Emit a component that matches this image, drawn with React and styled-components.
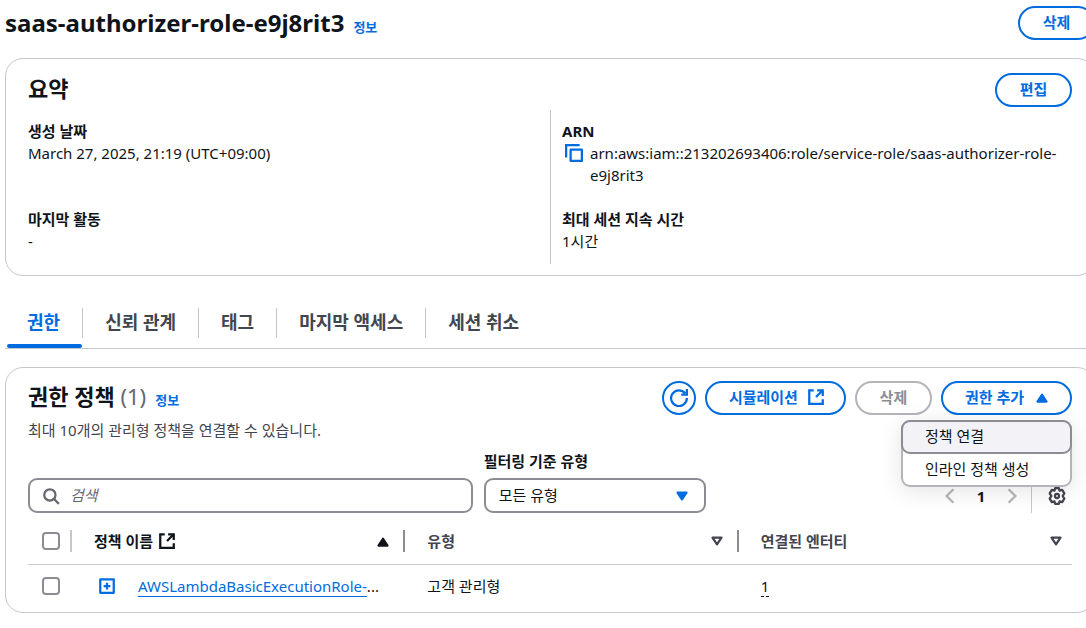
import React from 'react';
import styled, { createGlobalStyle } from 'styled-components';

const GlobalStyle = createGlobalStyle`
  * {
    box-sizing: border-box;
  }

  body {
    margin: 0;
    background: #fff;
    color: #0f141a;
    font-family: 'Noto Sans', 'Noto Sans CJK KR', sans-serif;
    font-size: 15px;
    line-height: 22px;
    overflow-x: hidden;
  }

  button,
  input,
  select {
    font: inherit;
    color: inherit;
  }
`;

// The console content runs a little past the right edge of the window
const Page = styled.main`
  margin: 0 -9px 0 5px;
  padding-top: 6px;
`;

const PageHeader = styled.header`
  display: flex;
  align-items: center;
  justify-content: space-between;
  margin-bottom: 18px;
`;

const TitleGroup = styled.div`
  display: flex;
  align-items: baseline;
  gap: 9px;
`;

const PageTitle = styled.h1`
  margin: 0;
  font-size: 24px;
  line-height: 34px;
  font-weight: 700;
`;

const InfoLink = styled.a`
  color: #006ce0;
  font-size: 13px;
  line-height: 18px;
  font-weight: 700;
  text-decoration: none;
`;

const Button = styled.button`
  display: inline-flex;
  align-items: center;
  justify-content: center;
  gap: 9px;
  min-width: 77px;
  height: 34px;
  padding: 0 ${({ $icon }) => ($icon ? '19px' : '22px')} 2px 22px;
  border: 2px solid ${({ disabled }) => (disabled ? '#b4b4bb' : '#006ce0')};
  border-radius: 22px;
  background: #fff;
  color: ${({ disabled }) => (disabled ? '#8c8c94' : '#006ce0')};
  font-weight: 700;
  white-space: nowrap;
`;

const IconButton = styled(Button)`
  width: 34px;
  min-width: 34px;
  padding: 0;
`;

const PlainButton = styled.button`
  display: inline-flex;
  align-items: center;
  justify-content: center;
  padding: 0;
  border: 0;
  background: none;
  color: ${({ $color }) => $color || '#424650'};
`;

const Card = styled.section`
  border: 1px solid #c6c6cd;
  border-radius: 18px;
  padding: 0 22px;
`;

const CardHeader = styled.div`
  display: flex;
  align-items: flex-start;
  justify-content: space-between;
  padding-top: 14px;
`;

const CardTitle = styled.h2`
  margin: 0;
  font-size: 22px;
  line-height: 30px;
  font-weight: 700;
`;

const Counter = styled.span`
  color: #656871;
  font-weight: 400;
`;

const Description = styled.p`
  margin: 8px 0 0;
  color: #424650;
`;

const Summary = styled.div`
  display: grid;
  grid-template-columns: 1fr 1fr;
  margin: 3px 0 11px;
`;

const SummaryColumn = styled.dl`
  display: grid;
  grid-template-rows: 66px 44px;
  gap: 22px;
  margin: 0;
  padding: 10px 0 12px;

  & + & {
    padding-left: 11px;
    border-left: 1px solid #c6c6cd;
  }

  dt {
    font-weight: 700;
  }

  dd {
    margin: 0;
  }
`;

const CopyValue = styled.div`
  display: flex;
  align-items: flex-start;
  gap: 7px;
  padding-left: 3px;

  button {
    height: 22px;
  }
`;

const TabList = styled.div`
  display: flex;
  margin-top: 24px;
  padding-bottom: 10px;
  border-bottom: 1px solid #c6c6cd;
`;

const Tab = styled.button`
  position: relative;
  height: 30px;
  margin-top: 8px;
  padding: 0 22px 2px;
  border: 0;
  border-right: ${({ $last }) => ($last ? '0' : '1px solid #c6c6cd')};
  background: none;
  color: ${({ $active }) => ($active ? '#006ce0' : '#424650')};
  font-size: 18px;
  font-weight: 700;

  &::after {
    content: '';
    display: ${({ $active }) => ($active ? 'block' : 'none')};
    position: absolute;
    left: 2px;
    right: 0;
    bottom: -10px;
    height: 4px;
    border-radius: 2px;
    background: #006ce0;
  }
`;

const PolicyCard = styled(Card)`
  margin-top: 18px;
  padding-bottom: 4px;

  ${CardHeader} {
    padding-top: 13px;
  }
`;

const Actions = styled.div`
  display: flex;
  gap: 9px;
`;

const MenuAnchor = styled.div`
  position: relative;
`;

const Menu = styled.ul`
  position: absolute;
  z-index: 2;
  top: 39px;
  right: 0;
  width: 171px;
  margin: 0;
  padding: 0;
  list-style: none;
  border: 2px solid #b4b4bb;
  border-radius: 9px;
  background: #fff;
  box-shadow: 0 4px 22px 1px rgba(0, 7, 22, 0.1);
`;

const MenuItem = styled.li`
  button {
    width: 100%;
    height: 31px;
    padding: 0 22px 2px;
    border: 0;
    background: none;
    text-align: left;
  }

  button[data-highlighted='true'] {
    width: calc(100% + 4px);
    height: 34px;
    margin: -2px -2px 0;
    border: 2px solid #8c8c94;
    border-radius: 9px;
    background: #f3f3f7;
  }
`;

const Filters = styled.div`
  display: grid;
  grid-template-columns: 2fr 1fr 355px;
  align-items: end;
  gap: 11px;
  margin-top: 9px;
`;

const Field = styled.div`
  display: flex;
  align-items: center;
  height: 35px;
  border: 2px solid #8c8c94;
  border-radius: 9px;
  background: #fff;
`;

const SearchField = styled(Field)`
  gap: 10px;
  padding: 0 12px;
  color: #656871;

  input {
    flex: 1;
    min-width: 0;
    height: 28px;
    padding: 0 0 2px;
    border: 0;
    outline: 0;
    background: none;
  }

  input::placeholder {
    color: #656871;
    font-style: italic;
    opacity: 1;
  }
`;

const TypeFilter = styled.div`
  label {
    display: block;
    margin-bottom: 6px;
    font-weight: 700;
  }
`;

const SelectField = styled(Field)`
  position: relative;
  color: #006ce0;

  select {
    width: 100%;
    height: 31px;
    padding: 0 36px 2px 13px;
    border: 0;
    outline: 0;
    appearance: none;
    background: none;
    color: #0f141a;
  }

  svg {
    position: absolute;
    right: 13px;
    pointer-events: none;
  }
`;

const Pager = styled.div`
  display: flex;
  align-items: center;
  justify-content: flex-end;
  height: 35px;
`;

const PageControls = styled.div`
  display: flex;
  gap: 13px;
  align-items: center;
  padding-right: 10px;

  button {
    width: 18px;
    height: 30px;
  }
`;

const PageNumber = styled(PlainButton)`
  color: #0f141a;
  font-weight: 700;
`;

const Preferences = styled.div`
  display: flex;
  align-items: center;
  height: 35px;
  padding: 0 6px 0 16px;
  border-left: 1px solid #c6c6cd;
`;

const Table = styled.table`
  width: 100%;
  margin-top: 5px;
  border-collapse: collapse;
  table-layout: fixed;
`;

const HeadCell = styled.th`
  height: 46px;
  padding: 0;
  border-bottom: 1px solid #c6c6cd;
  color: ${({ $sorted }) => ($sorted ? '#0f141a' : '#424650')};
  font-weight: 700;
  text-align: left;
`;

const HeadContent = styled.div`
  display: flex;
  align-items: center;
  justify-content: space-between;
  height: 22px;
  padding: 0 ${({ $last }) => ($last ? '7px' : '11px')} 0 22px;
  border-right: ${({ $last }) => ($last ? '0' : '2px solid #8c8c94')};
`;

const CheckHead = styled.div`
  display: flex;
  align-items: center;
  height: 22px;
  padding-left: 14px;
  border-right: 2px solid #c6c6cd;
`;

const HeadLabel = styled.span`
  display: inline-flex;
  align-items: center;
  gap: 5px;
`;

const Cell = styled.td`
  height: 44px;
  padding: 0 0 0 ${({ $check }) => ($check ? '14px' : '22px')};
`;

const Checkbox = styled.input.attrs({ type: 'checkbox' })`
  display: block;
  flex: none;
  width: 18px;
  height: 18px;
  margin: 0;
  appearance: none;
  border: 2px solid #8c8c94;
  border-radius: 4px;
  background: #fff;
`;

const PolicyName = styled.div`
  display: flex;
  align-items: center;
  gap: 22px;
  padding-left: 4px;
  white-space: nowrap;
`;

const PolicyLink = styled.a`
  border-bottom: 1px solid #006ce0;
  color: #006ce0;
  text-decoration: none;
`;

const EntityCount = styled.button`
  padding: 0;
  border: 0;
  border-bottom: 1px dashed #0f141a;
  background: none;
  line-height: 20px;
`;

const Icon = ({ size = 18, children }) => (
  <svg
    width={size}
    height={size}
    viewBox="0 0 16 16"
    fill="none"
    stroke="currentColor"
    strokeWidth="2"
    aria-hidden="true"
  >
    {children}
  </svg>
);

const ExternalIcon = () => (
  <Icon>
    <path d="M9 2h5v5" />
    <path d="m8 8 6-6" />
    <path d="M14 10v4H2V2h4" />
  </Icon>
);

const RefreshIcon = () => (
  <Icon>
    <path d="M15 8A7 7 0 1 1 13.6 4" />
    <path d="M15 0v5h-5" />
  </Icon>
);

const CopyIcon = () => (
  <Icon>
    <path d="M15 5H5v10h10V5Z" strokeLinejoin="round" />
    <path d="M13 1H1v11" />
  </Icon>
);

const SearchIcon = () => (
  <Icon>
    <circle cx="7" cy="7" r="5" />
    <path d="m15 15-4.5-4.5" />
  </Icon>
);

const ExpandIcon = () => (
  <Icon>
    <path d="M2 2h12v12H2z" strokeLinejoin="round" />
    <path d="M8 5v6M5 8h6" />
  </Icon>
);

const GearIcon = () => (
  <Icon>
    <path
      d="M6.3 1h3.4l.5 2.2 2.4-.6 1.9 3L13 8l1.5 2.4-1.9 3-2.4-.6-.5 2.2H6.3l-.5-2.2-2.4.6-1.9-3L3 8 1.5 5.6l1.9-3 2.4.6z"
      strokeLinejoin="round"
    />
    <circle cx="8" cy="8" r="1.8" />
  </Icon>
);

const ChevronIcon = ({ direction }) => (
  <Icon>
    <path d={direction === 'left' ? 'M11 2 5 8l6 6' : 'm5 2 6 6-6 6'} />
  </Icon>
);

const TriangleIcon = ({ direction, hollow }) => (
  <Icon>
    <path
      d={direction === 'up' ? 'M4 12h8L8 6z' : 'M4 5h8l-4 6z'}
      fill={hollow ? 'none' : 'currentColor'}
      strokeLinejoin="round"
    />
  </Icon>
);

const tabs = ['권한', '신뢰 관계', '태그', '마지막 액세스', '세션 취소'];

const policies = [
  { name: 'AWSLambdaBasicExecutionRole-', type: '고객 관리형', entities: 1 },
];

const App = () => (
  <>
    <GlobalStyle />
    <Page>
      <PageHeader>
        <TitleGroup>
          <PageTitle>saas-authorizer-role-e9j8rit3</PageTitle>
          <InfoLink href="#info">정보</InfoLink>
        </TitleGroup>
        <Button>삭제</Button>
      </PageHeader>

      <Card>
        <CardHeader>
          <CardTitle>요약</CardTitle>
          <Button>편집</Button>
        </CardHeader>
        <Summary>
          <SummaryColumn>
            <div>
              <dt>생성 날짜</dt>
              <dd>March 27, 2025, 21:19 (UTC+09:00)</dd>
            </div>
            <div>
              <dt>마지막 활동</dt>
              <dd>-</dd>
            </div>
          </SummaryColumn>
          <SummaryColumn>
            <div>
              <dt>ARN</dt>
              <dd>
                <CopyValue>
                  <PlainButton $color="#006ce0" aria-label="ARN 복사">
                    <CopyIcon />
                  </PlainButton>
                  <span>
                    arn:aws:iam::213202693406:role/service-role/saas-authorizer-role-e9j8rit3
                  </span>
                </CopyValue>
              </dd>
            </div>
            <div>
              <dt>최대 세션 지속 시간</dt>
              <dd>1시간</dd>
            </div>
          </SummaryColumn>
        </Summary>
      </Card>

      <TabList role="tablist">
        {tabs.map((tab, i) => (
          <Tab
            key={tab}
            role="tab"
            aria-selected={i === 0}
            $active={i === 0}
            $last={i === tabs.length - 1}
          >
            {tab}
          </Tab>
        ))}
      </TabList>

      <PolicyCard>
        <CardHeader>
          <div>
            <TitleGroup>
              <CardTitle>
                권한 정책 <Counter>(1)</Counter>
              </CardTitle>
              <InfoLink href="#policy-info">정보</InfoLink>
            </TitleGroup>
            <Description>최대 10개의 관리형 정책을 연결할 수 있습니다.</Description>
          </div>
          <Actions>
            <IconButton aria-label="새로 고침">
              <RefreshIcon />
            </IconButton>
            <Button $icon>
              시뮬레이션
              <ExternalIcon />
            </Button>
            <Button disabled>삭제</Button>
            <MenuAnchor>
              <Button $icon aria-expanded="true" aria-haspopup="menu">
                권한 추가
                <TriangleIcon direction="up" />
              </Button>
              <Menu role="menu">
                <MenuItem role="none">
                  <button role="menuitem" data-highlighted="true">
                    정책 연결
                  </button>
                </MenuItem>
                <MenuItem role="none">
                  <button role="menuitem">인라인 정책 생성</button>
                </MenuItem>
              </Menu>
            </MenuAnchor>
          </Actions>
        </CardHeader>

        <Filters>
          <SearchField>
            <SearchIcon />
            <input type="text" placeholder="검색" aria-label="검색" />
          </SearchField>
          <TypeFilter>
            <label htmlFor="policy-type">필터링 기준 유형</label>
            <SelectField>
              <select id="policy-type" defaultValue="all">
                <option value="all">모든 유형</option>
              </select>
              <TriangleIcon direction="down" />
            </SelectField>
          </TypeFilter>
          <Pager>
            <PageControls>
              <PlainButton $color="#b4b4bb" aria-label="이전 페이지">
                <ChevronIcon direction="left" />
              </PlainButton>
              <PageNumber>1</PageNumber>
              <PlainButton $color="#b4b4bb" aria-label="다음 페이지">
                <ChevronIcon direction="right" />
              </PlainButton>
            </PageControls>
            <Preferences>
              <PlainButton aria-label="기본 설정">
                <GearIcon />
              </PlainButton>
            </Preferences>
          </Pager>
        </Filters>

        <Table>
          <colgroup>
            <col width="44" />
            <col />
            <col />
            <col />
          </colgroup>
          <thead>
            <tr>
              <HeadCell>
                <CheckHead>
                  <Checkbox aria-label="모두 선택" />
                </CheckHead>
              </HeadCell>
              <HeadCell $sorted>
                <HeadContent>
                  <HeadLabel>
                    정책 이름
                    <ExternalIcon />
                  </HeadLabel>
                  <TriangleIcon direction="up" />
                </HeadContent>
              </HeadCell>
              <HeadCell>
                <HeadContent>
                  유형
                  <TriangleIcon direction="down" hollow />
                </HeadContent>
              </HeadCell>
              <HeadCell>
                <HeadContent $last>
                  연결된 엔터티
                  <TriangleIcon direction="down" hollow />
                </HeadContent>
              </HeadCell>
            </tr>
          </thead>
          <tbody>
            {policies.map((policy) => (
              <tr key={policy.name}>
                <Cell $check>
                  <Checkbox aria-label={policy.name} />
                </Cell>
                <Cell>
                  <PolicyName>
                    <PlainButton $color="#006ce0" aria-label="펼치기">
                      <ExpandIcon />
                    </PlainButton>
                    <span>
                      <PolicyLink href="#policy">{policy.name}</PolicyLink>...
                    </span>
                  </PolicyName>
                </Cell>
                <Cell>{policy.type}</Cell>
                <Cell>
                  <EntityCount>{policy.entities}</EntityCount>
                </Cell>
              </tr>
            ))}
          </tbody>
        </Table>
      </PolicyCard>
    </Page>
  </>
);

export default App;
